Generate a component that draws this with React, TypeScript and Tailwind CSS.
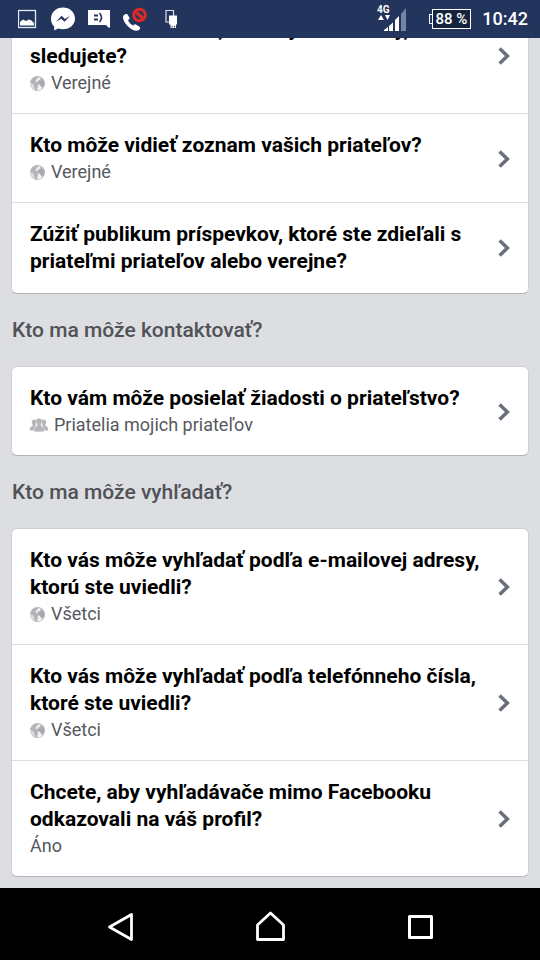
import React from 'react';

type Audience = 'globe' | 'friends';

interface Setting {
  title: string;
  value?: string;
  audience?: Audience;
}

interface Section {
  heading?: string;
  settings: Setting[];
}

const sections: Section[] = [
  {
    settings: [
      { title: 'Kto môže vidieť ľudí, stránky a zoznamy, ktoré sledujete?', value: 'Verejné', audience: 'globe' },
      { title: 'Kto môže vidieť zoznam vašich priateľov?', value: 'Verejné', audience: 'globe' },
      { title: 'Zúžiť publikum príspevkov, ktoré ste zdieľali s priateľmi priateľov alebo verejne?' },
    ],
  },
  {
    heading: 'Kto ma môže kontaktovať?',
    settings: [
      { title: 'Kto vám môže posielať žiadosti o priateľstvo?', value: 'Priatelia mojich priateľov', audience: 'friends' },
    ],
  },
  {
    heading: 'Kto ma môže vyhľadať?',
    settings: [
      { title: 'Kto vás môže vyhľadať podľa e-mailovej adresy, ktorú ste uviedli?', value: 'Všetci', audience: 'globe' },
      { title: 'Kto vás môže vyhľadať podľa telefónneho čísla, ktoré ste uviedli?', value: 'Všetci', audience: 'globe' },
      { title: 'Chcete, aby vyhľadávače mimo Facebooku odkazovali na váš profil?', value: 'Áno' },
    ],
  },
];

const GlobeIcon = () => (
  <svg width="15" height="15" viewBox="0 0 15 15" aria-hidden="true">
    <circle cx="7.5" cy="7.5" r="7.5" fill="#b3b4b7" />
    <path d="M5.6 4.4 8.2 1.2l2.6.2-.8 2.4-2 .9-.8 1.5-1.5-.5z" fill="#efeff1" />
    <path d="M.3 6.6 2.4 8l1.2.6.6 2.6 1.3 2.9C2.400 13.300.2 10.800.1 7.600z" fill="#dcdddf" />
    <path d="m9.4 5.400 2.500-1.200 1.400 1 .7 3.300-1.500 2.200-1.400-.4-.4-2-1.500-.9z" fill="#8f9095" opacity=".3" />
    <path d="m7.600 8.400 2.100.3.900 1.500 1.800 1.600-1.900 2.200-2.600.6-.9-1.300.9-2z" fill="#f1f1f3" />
  </svg>
);

const FriendsIcon = () => (
  <svg width="18" height="14" viewBox="0 0 18 14" fill="#b5b6b9" aria-hidden="true">
    <path d="M4.6 1.4c1.4 0 2.1 1 2 2.4 0 1-.4 1.8-.8 2.3v1.3L4.8 9l-.7 3.6H0v-2.2c0-.9.8-1.7 2.5-2.4V6.1c-.5-.6-.8-1.300-.8-2.300 0-1.400 1.200-2.400 2.900-2.400z" />
    <path d="M13.4 1.4c-1.400 0-2.100 1-2 2.400 0 1 .4 1.800.8 2.300v1.300l1 1.600.7 3.600H18v-2.200c0-.9-.8-1.700-2.500-2.400V6.100c.5-.6.8-1.300.8-2.300 0-1.400-1.200-2.400-2.900-2.400z" />
    <path d="M9 .2c2 0 3.100 1.200 3 3.100-.1 1.200-.5 2.100-1 2.800V8c1.900.8 2.900 1.500 2.900 2.500v3.300H4.100v-3.300c0-1 1-1.700 2.900-2.500V6.100c-.5-.7-.9-1.600-1-2.800C5.900 1.400 7 .2 9 .2z" stroke="#fff" strokeWidth=".3" />
  </svg>
);

const Chevron = () => (
  <svg width="13" height="18" viewBox="0 0 13 18" fill="none" stroke="#6a6f7c" strokeWidth="3.5" className="shrink-0" aria-hidden="true">
    <path d="m1.6 1.4 7.8 7.6-7.8 7.6" />
  </svg>
);

const SettingRow: React.FC<{ setting: Setting }> = ({ setting }) => (
  <li className="border-b border-[#dcdde0] last:border-b-0">
    <a
      href="#"
      className={`flex items-center justify-between gap-3 pl-[18px] pr-[17px] pt-[18px] ${setting.value ? 'pb-[17px]' : 'pb-[18px]'}`}
    >
      <div>
        <div className="text-[21px] leading-[27px] font-bold text-black">{setting.title}</div>
        {setting.value && (
          <div className="flex items-center gap-1.5 text-[18px] leading-[26px] text-[#55585e]">
            {setting.audience === 'globe' && <GlobeIcon />}
            {setting.audience === 'friends' && <FriendsIcon />}
            {setting.value}
          </div>
        )}
      </div>
      <Chevron />
    </a>
  </li>
);

const StatusBar = () => (
  <header className="flex h-[38px] items-center justify-between bg-[#23355c] pl-[18px] pr-3 text-white">
    <svg width="160" height="38" viewBox="18 0 160 38" aria-hidden="true">
      {/* gallery */}
      <rect x="18.5" y="10.5" width="17" height="17" fill="none" stroke="#e4ebf8" strokeWidth="1.3" />
      <path d="M20 25.5V22l3-2.5 3 1.5 3-1.5 2.5 1 2.500 2.500v2.500z" fill="#fff" />
      {/* messenger */}
      <path d="M63 7.500c-6.800 0-12 4.900-12 11 0 3.400 1.100 6 3.200 8v4l3.900-2c1.500.5 3.200.7 4.900.7 6.800 0 12-4.600 12-10.700s-5.200-11-12-11z" fill="#fff" />
      <path d="m56 21.800 5.700-6 3.200 3.100 5.300-3.100-5.700 6-3.200-3.100z" fill="#23355c" />
      {/* smiley message */}
      <path d="M88 10h22v17l-1 1-3-3H88z" fill="#fff" />
      <path d="M94 15.500h4M94 19.500h4" stroke="#23355c" strokeWidth="2" />
      <path d="M99.500 13q4 4.500 0 9" fill="none" stroke="#23355c" strokeWidth="1.6" />
      {/* blocked call */}
      <path d="M123.500 15.500c.9-1.600 2.800-2 3.800-1.200l2.200 3.400c.4.700-.2 1.600-1.500 2.400.8 2.500 2.800 4.600 5.200 5.400.9-1.100 1.900-1.500 2.600-1l3.700 2.200c1 .7.900 2-.5 3.200-2.300 1.700-6.600.8-10.600-3.100-4.100-4-6.400-8.500-4.900-11.300z" fill="#fff" />
      <circle cx="139.5" cy="15" r="5.8" fill="#23355c" stroke="#d92b27" strokeWidth="3" />
      <path d="m136 12 7 6.500" stroke="#d92b27" strokeWidth="3.5" />
      {/* usb */}
      <path d="M173.500 16v-5.500h-7.500v11.500h3.500" fill="none" stroke="#dbe3f2" strokeWidth="1.2" />
      <path d="M169 15.500h8v9h-1v3.500h-5.500v-3.500H169z" fill="#fff" />
      <path d="M172 26v1.500M174.500 26v1.500" stroke="#23355c" />
    </svg>
    <div className="flex items-center">
      <svg width="30" height="38" viewBox="377 0 30 38" className="mr-[22px]" aria-hidden="true">
        <text x="377" y="13" fill="#fff" fontSize="10" fontWeight="700">4G</text>
        <path d="m378 20 3-5 3 5zM385 15h5l-2.500 5z" fill="#fff" />
        <path d="M384 31v-1l4-3v4zM389 31v-5l4-3.500V31zM395 31V20l4-4v15z" fill="#fff" />
        <path d="M401 31V14l5-6v23z" fill="#7584a3" />
      </svg>
      <div className="flex items-center">
        <span className="h-[10px] w-[3px] border border-r-0 border-white" />
        <span className="border border-white bg-[#16233f] px-[3px] text-[15px] leading-[18px] font-medium">88 %</span>
      </div>
      <time className="ml-[11px] text-[18px] leading-[22px] font-medium">10:42</time>
    </div>
  </header>
);

const NavBar = () => (
  <nav className="flex h-[72px] items-center justify-center gap-[110px] bg-black pt-1.5">
    <button type="button" aria-label="Späť" className="flex w-10 justify-center">
      <svg width="30" height="32" viewBox="0 0 30 32" fill="none" stroke="#fff" strokeWidth="2.8" strokeLinejoin="round">
        <path d="M26.5 3.500v25L4.500 16z" />
      </svg>
    </button>
    <button type="button" aria-label="Domov" className="flex w-10 justify-center">
      <svg width="32" height="32" viewBox="0 0 32 32" fill="none" stroke="#fff" strokeWidth="2.8" strokeLinejoin="round">
        <path d="M3.500 28.500V14L16.500 2l13 12v14.500z" />
      </svg>
    </button>
    <button type="button" aria-label="Prehľad" className="flex w-10 justify-center">
      <svg width="28" height="28" viewBox="0 0 28 28" fill="none" stroke="#fff" strokeWidth="3" strokeLinejoin="round">
        <path d="M3.500 3.500h22v21h-22z" />
      </svg>
    </button>
  </nav>
);

const App: React.FC = () => {
  return (
    <div className="flex min-h-screen flex-col bg-[#dddee2] font-['Roboto',sans-serif]">
      <StatusBar />
      <main className="flex-1 overflow-hidden">
        {/* the list is scrolled up underneath the status bar */}
        <div className="-mt-[41px] px-[11px] pb-[11px]">
          {sections.map((section, i) => (
            <section key={i}>
              {section.heading && (
                <h2 className="mt-[23px] mb-[22px] pl-px text-[21px] leading-[27px] font-medium text-[#505257]">
                  {section.heading}
                </h2>
              )}
              <ul className="rounded-md border border-[#cfd0d4] border-b-[#b3b4b9] bg-white">
                {section.settings.map(setting => (
                  <SettingRow key={setting.title} setting={setting} />
                ))}
              </ul>
            </section>
          ))}
        </div>
      </main>
      <NavBar />
    </div>
  );
};

export default App;
